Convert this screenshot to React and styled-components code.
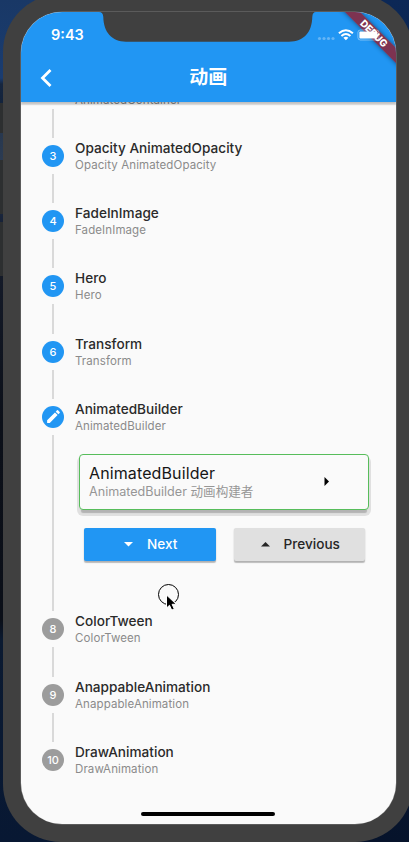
import React from 'react';
import styled, { createGlobalStyle } from 'styled-components';

const Global = createGlobalStyle`
  * { box-sizing: border-box; }
  body { margin: 0; overflow: hidden; }
`;

const Desktop = styled.div`
  width: 409px;
  height: 842px;
  overflow: hidden;
  position: relative;
  background:
    linear-gradient(180deg, #2d2f30, #2d2f30) 0 103px / 4px 30px no-repeat,
    linear-gradient(180deg, #2d2f30, #2d2f30) 0 160px / 4px 54px no-repeat,
    linear-gradient(180deg, #2d2f30, #2d2f30) 0 222px / 4px 54px no-repeat,
    linear-gradient(180deg, #193866 0px, #1a3c70 78px, #16263f 84px, #13233c 102px, #28384f 133px, #2b3b52 159px, #172238 222px, #141a28 276px, #0c1019 420px, #0b0f18 620px, #0b1a31 640px, #081833 842px) left / 60px 100% no-repeat,
    linear-gradient(180deg, #0c2856 0px, #0a2248 200px, #06132b 842px);
`;

const Phone = styled.div`
  width: 410px;
  height: 848px;
  margin: -6px 0 0 3px;
  padding: 18px 17px 18px 18px;
  border-radius: 58px;
  background: #404040;
  overflow: hidden;
`;

const Screen = styled.div`
  position: relative;
  width: 374.5px;
  height: 811.5px;
  border-radius: 41px;
  overflow: hidden;
  background: #fafafa;
  font-family: Inter, 'Noto Sans CJK SC', sans-serif;
  box-shadow: 0 0 0 0.5px #777;
  display: flex;
  flex-direction: column;
`;

const AppBar = styled.header`
  position: relative;
  z-index: 1;
  flex: none;
  height: 90.4px;
  background: #2196f3;
  box-shadow: 0 2px 2px rgba(0, 0, 0, 0.18), 0 3px 1px rgba(0, 0, 0, 0.08);
`;

const Notch = styled.svg`
  position: absolute;
  left: 78px;
  top: -1px;
  display: block;
`;

const StatusBar = styled.div`
  position: relative;
  z-index: 2;
  display: flex;
  align-items: center;
  justify-content: space-between;
  height: 45px;
  padding: 0 13px 0 30px;
  color: #fff;
`;

const Clock = styled.span`
  font-size: 14.5px;
  line-height: 18px;
  font-weight: 600;
`;

const StatusIcons = styled.div`
  display: flex;
  align-items: center;
`;

const NavRow = styled.div`
  display: grid;
  grid-template-columns: 51px 1fr 51px;
  align-items: center;
  height: 42px;
`;

const BackIcon = styled.svg`
  display: block;
  margin-left: 18px;
`;

const Title = styled.h1`
  margin: 0;
  text-align: center;
  color: #fff;
  font-size: 19px;
  line-height: 24px;
  font-weight: 700;
`;

const DebugBanner = styled.div`
  position: absolute;
  z-index: 1;
  right: -29px;
  top: 16px;
  width: 102px;
  height: 11px;
  transform: rotate(45deg);
  background: rgba(143, 32, 50, 0.84);
  box-shadow: 0 0 5px rgba(0, 0, 0, 0.45);
  color: #fff;
  font-size: 9.8px;
  line-height: 11px;
  font-weight: 800;
  text-align: center;
`;

const Steps = styled.main`
  flex: 1;
  overflow: hidden;
  padding-left: 21px;
`;

const StepList = styled.div`
  margin-top: -22.9px;
`;

const StepRow = styled.section`
  display: grid;
  grid-template-columns: 22px 1fr;
  column-gap: 11px;
  height: ${({ $tall }) => ($tall ? 212.6 : 65.25)}px;
`;

const Rail = styled.div`
  display: flex;
  flex-direction: column;
  align-items: center;
`;

const Badge = styled.div`
  flex: none;
  display: flex;
  align-items: center;
  justify-content: center;
  width: 22px;
  height: 22px;
  border-radius: 50%;
  background: ${({ $pending }) => ($pending ? '#9c9c9c' : '#2196f3')};
  color: #fff;
  font-size: 11px;
  font-weight: 500;
`;

const Line = styled.div`
  flex: 1;
  width: 1.5px;
  margin: 7px 0;
  background: #d9d9d9;
`;

const StepBody = styled.div`
  margin-top: -5px;
`;

const StepTitle = styled.div`
  font-size: 13.6px;
  line-height: 17px;
  font-weight: 500;
  letter-spacing: 0.02px;
  color: #2a2a2a;
`;

const StepSubtitle = styled.div`
  font-size: 11.5px;
  line-height: 17px;
  letter-spacing: 0.1px;
  color: #8b8b8b;
`;

const Card = styled.div`
  display: flex;
  align-items: center;
  justify-content: space-between;
  width: 290px;
  height: 56px;
  margin: 19px 0 0 4px;
  padding: 0 36px 0 9px;
  border: 1px solid #57bd5b;
  border-radius: 4px;
  background: #fafafa;
  box-shadow: 0 5px 1px -2px rgba(0, 0, 0, 0.2), 0 4px 0 2px rgba(0, 0, 0, 0.1);
`;

const CardTitle = styled.div`
  font-size: 16px;
  line-height: 19px;
  letter-spacing: 0.12px;
  color: #161616;
`;

const CardSubtitle = styled.div`
  font-size: 12.6px;
  line-height: 17px;
  color: #969696;
`;

const Actions = styled.div`
  display: flex;
  gap: 18px;
  margin: 18px 0 0 9px;
`;

const ActionButton = styled.button`
  display: flex;
  align-items: center;
  width: 131.5px;
  height: 33px;
  padding: 0 0 0 ${({ $primary }) => ($primary ? 39 : 26)}px;
  gap: 13px;
  border: 0;
  border-radius: 2px;
  background: ${({ $primary }) => ($primary ? '#2196f3' : '#e0e0e0')};
  color: ${({ $primary }) => ($primary ? '#fff' : '#262626')};
  box-shadow: 0 1.5px 1px rgba(0, 0, 0, 0.22), 0 1px 2px rgba(0, 0, 0, 0.12);
  font: 500 13.6px Inter, sans-serif;
`;

const HomeIndicator = styled.div`
  position: absolute;
  left: 120px;
  bottom: 7.5px;
  width: 134px;
  height: 4.5px;
  border-radius: 3px;
  background: #000;
`;

const Pointer = styled.svg`
  position: absolute;
  left: 156px;
  top: 582px;
`;

const steps = [
  { n: 2, title: 'AnimatedContainer', sub: 'AnimatedContainer' },
  { n: 3, title: 'Opacity AnimatedOpacity', sub: 'Opacity AnimatedOpacity' },
  { n: 4, title: 'FadeInImage', sub: 'FadeInImage' },
  { n: 5, title: 'Hero', sub: 'Hero' },
  { n: 6, title: 'Transform', sub: 'Transform' },
  { n: 7, title: 'AnimatedBuilder', sub: 'AnimatedBuilder', active: true },
  { n: 8, title: 'ColorTween', sub: 'ColorTween', pending: true },
  { n: 9, title: 'AnappableAnimation', sub: 'AnappableAnimation', pending: true },
  { n: 10, title: 'DrawAnimation', sub: 'DrawAnimation', pending: true, last: true },
];

function PencilIcon() {
  return (
    <svg width="17" height="17" viewBox="0 0 24 24" fill="#fff">
      <path d="M3 17.25V21h3.75L17.81 9.94l-3.75-3.75L3 17.25zM20.71 7.04a1 1 0 0 0 0-1.41l-2.34-2.34a1 1 0 0 0-1.41 0l-1.83 1.83 3.75 3.75 1.83-1.83z" />
    </svg>
  );
}

function Arrow({ dir }) {
  const d = { down: 'M1 3h9L5.500 7.500z', up: 'M1 7.500h9L5.500 3z', right: 'M3.500 1v9L8 5.500z' }[dir];
  return (
    <svg width="11" height="11" viewBox="0 0 11 11" fill="currentColor">
      <path d={d} />
    </svg>
  );
}

function ActiveContent() {
  return (
    <>
      <Card>
        <div>
          <CardTitle>AnimatedBuilder</CardTitle>
          <CardSubtitle>AnimatedBuilder 动画构建者</CardSubtitle>
        </div>
        <Arrow dir="right" />
      </Card>
      <Actions>
        <ActionButton $primary>
          <Arrow dir="down" />
          Next
        </ActionButton>
        <ActionButton>
          <Arrow dir="up" />
          Previous
        </ActionButton>
      </Actions>
    </>
  );
}

function Step({ step }) {
  return (
    <StepRow $tall={step.active}>
      <Rail>
        <Badge $pending={step.pending}>{step.active ? <PencilIcon /> : step.n}</Badge>
        {!step.last && <Line />}
      </Rail>
      <StepBody>
        <StepTitle>{step.title}</StepTitle>
        <StepSubtitle>{step.sub}</StepSubtitle>
        {step.active && <ActiveContent />}
      </StepBody>
    </StepRow>
  );
}

export default function App() {
  return (
    <Desktop>
      <Global />
      <Phone>
        <Screen>
          <AppBar>
            <Notch width="218" height="31" viewBox="0 0 218 31">
              <path d="M0 0H218V1H217Q213.500 1 213.300 6C213 21 205 30.700 190 30.700H27C13 30.700 4.500 21 4.300 6Q4 1 0 1z" fill="#404040" />
            </Notch>
            <DebugBanner>DEBUG</DebugBanner>
            <StatusBar>
              <Clock>9:43</Clock>
              <StatusIcons>
                <svg width="66" height="14" viewBox="0 0 66 14">
                  <g fill="#65b5f6">
                    <circle cx="2.500" cy="10.500" r="1.600" />
                    <circle cx="7" cy="10.500" r="1.600" />
                    <circle cx="11.500" cy="10.500" r="1.600" />
                    <circle cx="16" cy="10.500" r="1.600" />
                  </g>
                  <g fill="none" stroke="#fff" strokeWidth="2">
                    <path d="M21.900 5.300Q28.900 -.9 35.900 5.300" />
                    <path d="M24.400 7.900Q28.900 4.100 33.400 7.900" />
                  </g>
                  <path d="M26.400 9.700Q28.900 7.700 31.400 9.700L28.900 12.200z" fill="#fff" />
                  <rect x="40.900" y="2" width="21" height="10" rx="2.500" fill="none" stroke="#fff" strokeOpacity="0.4" />
                  <rect x="42.400" y="3.500" width="18" height="7" rx="1" fill="#fff" />
                </svg>
              </StatusIcons>
            </StatusBar>
            <NavRow>
              <BackIcon width="14" height="20" viewBox="0 0 14 20">
                <path d="M11.500 2L3.500 10l8 8" fill="none" stroke="#fff" strokeWidth="2.800" />
              </BackIcon>
              <Title>动画</Title>
            </NavRow>
          </AppBar>
          <Steps>
            <StepList>
              {steps.map((s) => (
                <Step key={s.n} step={s} />
              ))}
            </StepList>
          </Steps>
          <HomeIndicator />
        </Screen>
      </Phone>
      <Pointer width="26" height="32" viewBox="0 0 26 32">
        <circle cx="12.500" cy="12.500" r="10" fill="none" stroke="#000" />
        <path d="M10.500 13v13l3-2.700 2.200 4.800 2.600-1.100-2.200-4.700h4.200z" fill="#000" stroke="#fff" strokeWidth="1" />
      </Pointer>
    </Desktop>
  );
}
